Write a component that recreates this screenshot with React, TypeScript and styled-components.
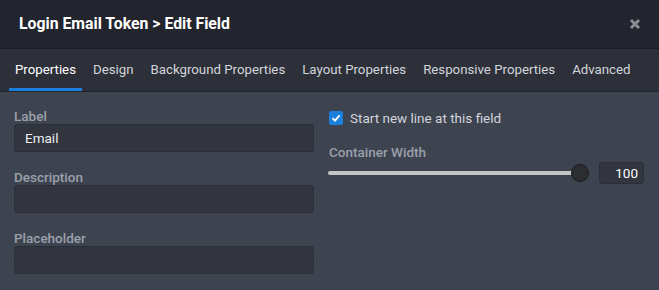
import React, {useState} from 'react';
import styled, {createGlobalStyle} from 'styled-components';

const GlobalStyle = createGlobalStyle`
	html, body {
		margin: 0;
		padding: 0;
		background: #3e4350;
	}
	body {
		font-family: Roboto, 'Liberation Sans', Arial, sans-serif;
		-webkit-font-smoothing: antialiased;
	}
	* {
		box-sizing: border-box;
	}
`;

const Modal = styled.div`
	width: 659px;
	height: 290px;
	display: flex;
	flex-direction: column;
	background: #3e4350;
	overflow: hidden;
`;

const Header = styled.div`
	flex: 0 0 49px;
	display: flex;
	align-items: center;
	justify-content: space-between;
	padding: 0 17px 1px 19px;
	background: #22252d;
	border-bottom: 1px solid #1b1d23;
`;

const Title = styled.h2`
	margin: 0;
	font-size: 15.8px;
	font-weight: 700;
	color: #ffffff;
`;

const Close = styled.button`
	border: 0;
	background: none;
	padding: 0;
	width: 14px;
	height: 14px;
	display: flex;
	align-items: center;
	justify-content: center;
	cursor: pointer;
`;

const TabBar = styled.div`
	flex: 0 0 43px;
	display: flex;
	gap: 5px;
	padding: 0 9px;
	background: #2d3039;
	border-bottom: 1px solid #23252c;
`;

const Tab = styled.div<{$active?: boolean}>`
	display: flex;
	align-items: center;
	padding: 2px 6px 0;
	font-size: 13.25px;
	color: ${p => (p.$active ? '#ffffff' : '#d2d5db')};
	border-bottom: 3px solid ${p => (p.$active ? '#1a80dc' : 'transparent')};
	cursor: pointer;
`;

const Body = styled.div`
	flex: 1;
	display: grid;
	grid-template-columns: 300px 1fr;
	column-gap: 14px;
	padding: 16px 15px 0 14px;
`;

const Column = styled.div`
	display: flex;
	flex-direction: column;
`;

const Field = styled.div`
	display: flex;
	flex-direction: column;
	margin-bottom: 17px;
`;

const Label = styled.label`
	font-size: 13.5px;
	font-weight: 500;
	color: #9aa0ab;
	line-height: 16px;
`;

const Input = styled.input`
	height: 28px;
	width: 100%;
	padding: 0 10px;
	font-family: inherit;
	font-size: 13.5px;
	color: #eceef1;
	background: #32353e;
	border: 1px solid #2b2e36;
	border-radius: 3px;
	outline: none;
`;

const CheckRow = styled.label`
	display: flex;
	align-items: center;
	gap: 7px;
	height: 16px;
	margin-top: 2px;
	margin-left: 1px;
	font-size: 13.5px;
	color: #d2d5db;
`;

const Box = styled.span`
	width: 14px;
	height: 14px;
	border-radius: 2px;
	background: #1a80dc;
	display: flex;
	align-items: center;
	justify-content: center;
`;

const WidthLabel = styled(Label)`
	margin-top: 18px;
	margin-left: 1px;
`;

const SliderRow = styled.div`
	display: flex;
	align-items: center;
	height: 24px;
	margin-top: 1px;
`;

const Track = styled.div`
	position: relative;
	flex: 0 0 252px;
	height: 4px;
	background: #c4c4c4;
	border-radius: 2px;
`;

const Thumb = styled.span`
	position: absolute;
	top: 50%;
	width: 18px;
	height: 18px;
	margin: -9px 0 0 -9px;
	border-radius: 50%;
	background: #2b2d31;
	border: 1px solid #1a1b1e;
`;

const NumberBox = styled.input`
	margin-left: 19px;
	width: 45px;
	height: 22px;
	padding: 0 5px;
	text-align: right;
	font-family: inherit;
	font-size: 13.5px;
	color: #ffffff;
	background: #32353e;
	border: 1px solid #2b2e36;
	border-radius: 3px;
	outline: none;
`;

const tabs = ['Properties', 'Design', 'Background Properties', 'Layout Properties', 'Responsive Properties', 'Advanced'];

const App = () => {
	const [active, setActive] = useState(0);
	const width = 100;

	return (
		<Modal>
			<GlobalStyle />
			<Header>
				<Title>Login Email Token &gt; Edit Field</Title>
				<Close type='button' aria-label='Close'>
					<svg width='12' height='12' viewBox='0 0 12 12'>
						<path d='M2 2 L10 10 M10 2 L2 10' stroke='#8a8d93' strokeWidth='3' strokeLinecap='butt' />
					</svg>
				</Close>
			</Header>
			<TabBar>
				{tabs.map((t, i) => (
					<Tab key={t} $active={i === active} onClick={() => setActive(i)}>{t}</Tab>
				))}
			</TabBar>
			<Body>
				<Column>
					<Field>
						<Label>Label</Label>
						<Input defaultValue='Email' />
					</Field>
					<Field>
						<Label>Description</Label>
						<Input />
					</Field>
					<Field>
						<Label>Placeholder</Label>
						<Input />
					</Field>
				</Column>
				<Column>
					<CheckRow>
						<Box>
							<svg width='10' height='10' viewBox='0 0 10 10'>
								<path d='M1.5 5.2 L4 7.6 L8.6 2.4' fill='none' stroke='#fff' strokeWidth='1.8' />
							</svg>
						</Box>
						Start new line at this field
					</CheckRow>
					<WidthLabel>Container Width</WidthLabel>
					<SliderRow>
						<Track>
							<Thumb style={{left: `${width}%`}} />
						</Track>
						<NumberBox defaultValue={width} />
					</SliderRow>
				</Column>
			</Body>
		</Modal>
	);
};

export default App;
